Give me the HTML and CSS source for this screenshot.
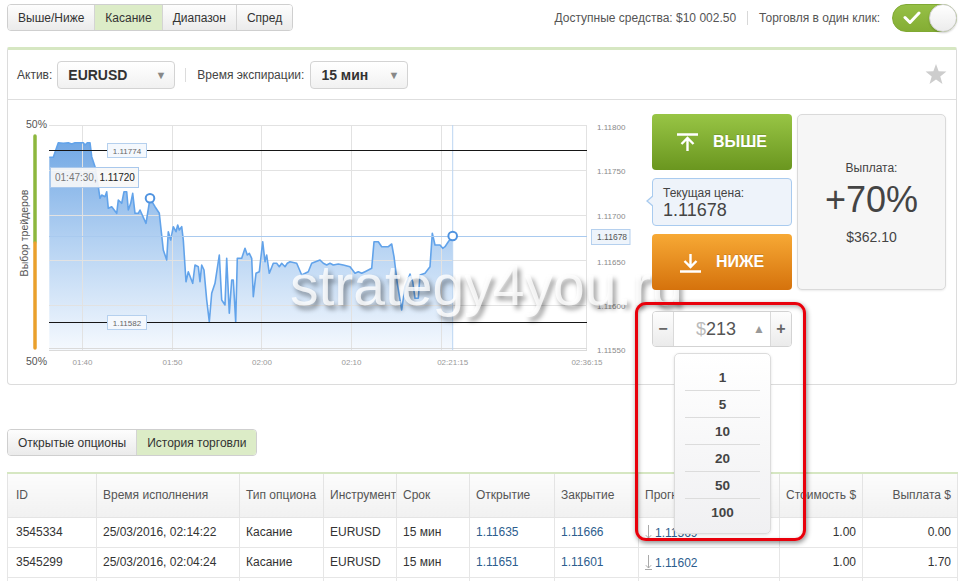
FILE: index.html
```html
<!DOCTYPE html>
<html lang="ru">
<head>
<meta charset="utf-8">
<title>Касание</title>
<link rel="stylesheet" href="styles.css">
</head>
<body>
<div class="page">
  <header class="topbar">
    <nav class="seg">
      <span class="seg-item">Выше/Ниже</span>
      <span class="seg-item active">Касание</span>
      <span class="seg-item">Диапазон</span>
      <span class="seg-item">Спред</span>
    </nav>
    <div class="account">
      <span>Доступные средства: $10 002.50</span>
      <span class="sep"></span>
      <span>Торговля в один клик:</span>
      <span class="toggle">
        <svg class="check" width="18" height="14" viewBox="0 0 18 14"><path d="M2 6.5L7 11.5L16 2" fill="none" stroke="#fff" stroke-width="3" stroke-linecap="round" stroke-linejoin="round"/></svg>
        <span class="knob"></span>
      </span>
    </div>
  </header>

  <section class="panel">
    <div class="panel-head">
      <span class="lbl">Актив:</span>
      <div class="select sel-asset"><span>EURUSD</span><span class="caret">▼</span></div>
      <span class="vsep"></span>
      <span class="lbl">Время экспирации:</span>
      <div class="select sel-exp"><span>15 мин</span><span class="caret">▼</span></div>
      <svg class="star" width="22" height="22" viewBox="0 0 22 22"><polygon points="11,0 13.65,7.36 21.46,7.6 15.28,12.39 17.47,19.9 11,15.5 4.53,19.9 6.72,12.39 0.54,7.6 8.35,7.36" fill="#cdcdcd"/></svg>
    </div>
    <div class="panel-body">
      <svg class="chart" width="632" height="284" viewBox="8 100 632 284">
        <defs>
          <linearGradient id="fillg" x1="0" y1="130" x2="0" y2="350" gradientUnits="userSpaceOnUse">
            <stop offset="0" stop-color="#6aa3e3"/>
            <stop offset="0.5" stop-color="#b3d1f2"/>
            <stop offset="1" stop-color="#f5f9fe"/>
          </linearGradient>
        </defs>
        <text x="36.5" y="127.5" class="pct">50%</text>
        <text x="36.5" y="364.5" class="pct">50%</text>
        <line x1="35" y1="136" x2="35" y2="242" stroke="#8db73d" stroke-width="3.5" stroke-linecap="round"/>
        <line x1="35" y1="243" x2="35" y2="348" stroke="#eaa02c" stroke-width="3.5" stroke-linecap="round"/>
        <text transform="translate(28 233) rotate(-90)" class="vlabel">Выбор трейдеров</text>

        <path d="M49.3 350 L49.3 157.3 L53.3 157.3 58.3 142.7 63.3 143.3 68.3 142.7 71.7 144 75 142.7 83.3 142.7 85 145 87.3 142.7 90 142.7 91.7 156.7 95 166.7 98.3 186.7 100 198.3 101.7 195 105 196.7 106.7 191.7 108.3 208.3 111.7 206.7 116.7 213.3 118.3 200 121.7 203.3 124 191.7 126.7 191.7 128.3 210 130.7 203.3 132.7 193.3 135 213.3 138.3 213.3 140 210 146 223.3 150 198.3 155 206.7 159.3 213.3 163.3 250 166.7 260 168.3 231.7 170.7 240 173.3 226.7 176 231.7 177.7 225 179.3 230 181.7 226.7 183.3 240 186 281.7 188.3 271.7 192.7 283.3 195 265 198.3 266.7 200 281.7 201.7 265 204 270 206.7 300 209.3 321.7 211.7 293.3 215 283.3 219.3 255 221.7 300 225 305 226.7 258.3 229.3 313.3 231.7 280 233.3 280 235.7 321.7 237.3 258.3 241.7 258.3 245 248.3 247.3 255 249.3 253.3 251.7 258.3 253.3 296.7 256 273.3 259.3 271.7 262.7 241.7 265 261.7 266.7 255 269.3 273.3 273.3 263.3 276.7 263.3 279.3 266.7 281.7 263.3 285 266.7 287.3 263.3 290 261.7 296.7 263.3 301.7 275 308.3 271.7 311.7 263.3 320 260 323.3 263.3 326.7 265 330 263.3 333.3 265 338.3 264 343.3 265 350 266.7 355 273.3 358.3 271.7 361.7 273.3 365 271.7 371.7 268.3 374 241.7 378.3 241.7 381.7 246.7 388.3 246.7 391.7 244 394 256.7 397.3 283.3 401.7 310 405 286.7 410 274 412.7 281.7 415 298.3 418.3 298.3 420 275 425 273.3 430 266.7 432.3 233.3 435 245 440 245 442.7 248.3 445 246.7 448.3 241.7 452.7 236 L452.7 350 Z" fill="url(#fillg)"/>

        <g stroke="#e2e2e2" stroke-width="1" fill="none">
          <path d="M49 125.5H587M49 170.5H587M49 215.5H587M49 260.5H587M49 305.5H587"/>
          <path d="M82.5 125V351M172.5 125V351M261.5 125V351M351.5 125V351M441.5 125V351M586.5 125V351"/>
        </g>
        <path d="M49 348.5H587M49 350.5H587" stroke="#dadada" fill="none"/>
        <path d="M452.7 125V350" stroke="#bcd6f2" fill="none"/>

        <path d="M49.3 157.3 L53.3 157.3 58.3 142.7 63.3 143.3 68.3 142.7 71.7 144 75 142.7 83.3 142.7 85 145 87.3 142.7 90 142.7 91.7 156.7 95 166.7 98.3 186.7 100 198.3 101.7 195 105 196.7 106.7 191.7 108.3 208.3 111.7 206.7 116.7 213.3 118.3 200 121.7 203.3 124 191.7 126.7 191.7 128.3 210 130.7 203.3 132.7 193.3 135 213.3 138.3 213.3 140 210 146 223.3 150 198.3 155 206.7 159.3 213.3 163.3 250 166.7 260 168.3 231.7 170.7 240 173.3 226.7 176 231.7 177.7 225 179.3 230 181.7 226.7 183.3 240 186 281.7 188.3 271.7 192.7 283.3 195 265 198.3 266.7 200 281.7 201.7 265 204 270 206.7 300 209.3 321.7 211.7 293.3 215 283.3 219.3 255 221.7 300 225 305 226.7 258.3 229.3 313.3 231.7 280 233.3 280 235.7 321.7 237.3 258.3 241.7 258.3 245 248.3 247.3 255 249.3 253.3 251.7 258.3 253.3 296.7 256 273.3 259.3 271.7 262.7 241.7 265 261.7 266.7 255 269.3 273.3 273.3 263.3 276.7 263.3 279.3 266.7 281.7 263.3 285 266.7 287.3 263.3 290 261.7 296.7 263.3 301.7 275 308.3 271.7 311.7 263.3 320 260 323.3 263.3 326.7 265 330 263.3 333.3 265 338.3 264 343.3 265 350 266.7 355 273.3 358.3 271.7 361.7 273.3 365 271.7 371.7 268.3 374 241.7 378.3 241.7 381.7 246.7 388.3 246.7 391.7 244 394 256.7 397.3 283.3 401.7 310 405 286.7 410 274 412.7 281.7 415 298.3 418.3 298.3 420 275 425 273.3 430 266.7 432.3 233.3 435 245 440 245 442.7 248.3 445 246.7 448.3 241.7 452.7 236" fill="none" stroke="#62a3ea" stroke-width="1.6" stroke-linejoin="round"/>

        <path d="M49 236.5H587" stroke="#a9caef" fill="none"/>
        <path d="M49 150.5H587M49 322.5H587" stroke="#161616" stroke-width="1.2" fill="none"/>

        <rect x="107.5" y="143.5" width="39" height="14" fill="#f4f8fd" stroke="#b5d0ee"/>
        <text x="127" y="153.5" class="box-t">1.11774</text>
        <rect x="107.5" y="315.5" width="39" height="14" fill="#f4f8fd" stroke="#b5d0ee"/>
        <text x="127" y="325.5" class="box-t">1.11582</text>

        <rect x="50.5" y="167.5" width="88" height="20" fill="#f7f7f7" fill-opacity="0.92" stroke="#a9c8ec"/>
        <text x="55" y="181" class="tip"><tspan fill="#777">01:47:30, </tspan><tspan fill="#222">1.11720</tspan></text>

        <circle cx="150" cy="198.3" r="4.3" fill="#fff" stroke="#4f93e0" stroke-width="2"/>
        <circle cx="452.7" cy="236" r="4.3" fill="#fff" stroke="#4f93e0" stroke-width="2"/>

        <g class="ytick">
          <text x="597" y="130">1.11800</text>
          <text x="597" y="174">1.11750</text>
          <text x="597" y="219">1.11700</text>
          <text x="597" y="264.5">1.11650</text>
          <text x="597" y="309">1.11600</text>
          <text x="597" y="353">1.11550</text>
        </g>
        <rect x="591.5" y="229.5" width="38.5" height="15" fill="#eef4fb" stroke="#b5d0ee"/>
        <text x="597" y="240" class="cur-t">1.11678</text>

        <g class="xtick">
          <text x="82.5" y="364.5">01:40</text>
          <text x="172.5" y="364.5">01:50</text>
          <text x="262" y="364.5">02:00</text>
          <text x="351.5" y="364.5">02:10</text>
          <text x="452.7" y="364.5">02:21:15</text>
          <text x="587" y="364.5" text-anchor="end">02:36:15</text>
        </g>
      </svg>

      <div class="watermark">strategy4you.ru</div>

      <div class="trade">
        <div class="trade-grid">
          <button class="btn btn-up">
            <svg width="21" height="18" viewBox="0 0 21 18"><path d="M0 1.5H21M10.5 18V5M4.5 11L10.5 5L16.5 11" fill="none" stroke="#fff" stroke-width="2.4"/></svg>
            <span>ВЫШЕ</span>
          </button>
          <div class="price">
            <div class="price-label">Текущая цена:</div>
            <div class="price-value">1.11678</div>
          </div>
          <button class="btn btn-down">
            <svg width="21" height="19" viewBox="0 0 21 19"><path d="M10.5 0V13M4.5 7L10.5 13L16.5 7M0 17.5H21" fill="none" stroke="#fff" stroke-width="2.4"/></svg>
            <span>НИЖЕ</span>
          </button>
          <div class="payout">
            <div class="pay-label">Выплата:</div>
            <div class="pay-pct">+70%</div>
            <div class="pay-sum">$362.10</div>
          </div>
        </div>
        <div class="amount">
          <span class="amt-btn minus">−</span>
          <span class="amt-mid"><span class="cur">$</span>213<span class="amt-caret">▲</span></span>
          <span class="amt-btn plus">+</span>
          <ul class="dropdown">
            <li>1</li>
            <li>5</li>
            <li>10</li>
            <li>20</li>
            <li>50</li>
            <li>100</li>
          </ul>
          <div class="highlight"></div>
        </div>
      </div>
    </div>
  </section>

  <nav class="seg tabs2">
    <span class="seg-item">Открытые опционы</span>
    <span class="seg-item active">История торговли</span>
  </nav>

  <table class="history">
    <colgroup>
      <col style="width:89px"><col style="width:143px"><col style="width:84px"><col style="width:73px"><col style="width:73px">
      <col style="width:85px"><col style="width:84px"><col style="width:141px"><col style="width:83px"><col style="width:95px">
    </colgroup>
    <thead>
      <tr>
        <th class="first">ID</th>
        <th>Время исполнения</th>
        <th>Тип опциона</th>
        <th>Инструмент</th>
        <th>Срок</th>
        <th>Открытие</th>
        <th>Закрытие</th>
        <th>Прогноз</th>
        <th class="num">Стоимость $</th>
        <th class="num">Выплата $</th>
      </tr>
    </thead>
    <tbody>
      <tr>
        <td class="first">3545334</td>
        <td>25/03/2016, 02:14:22</td>
        <td>Касание</td>
        <td>EURUSD</td>
        <td>15 мин</td>
        <td class="rate">1.11635</td>
        <td class="rate">1.11666</td>
        <td class="rate"><svg class="farrow" width="7" height="15" viewBox="0 0 7 15"><path d="M3.5 0V13M0.8 10.2L3.5 13L6.2 10.2M0 14.5H7" fill="none" stroke="#a9a9a9" stroke-width="1"/></svg>1.11569</td>
        <td class="num">1.00</td>
        <td class="num">0.00</td>
      </tr>
      <tr>
        <td class="first">3545299</td>
        <td>25/03/2016, 02:04:24</td>
        <td>Касание</td>
        <td>EURUSD</td>
        <td>15 мин</td>
        <td class="rate">1.11651</td>
        <td class="rate">1.11601</td>
        <td class="rate"><svg class="farrow" width="7" height="15" viewBox="0 0 7 15"><path d="M3.5 0V13M0.8 10.2L3.5 13L6.2 10.2M0 14.5H7" fill="none" stroke="#a9a9a9" stroke-width="1"/></svg>1.11602</td>
        <td class="num">1.00</td>
        <td class="num">1.70</td>
      </tr>
      <tr>
        <td class="first"></td><td></td><td></td><td></td><td></td>
        <td></td><td></td><td></td><td></td><td></td>
      </tr>
    </tbody>
  </table>
</div>
</body>
</html>
```

FILE: styles.css
```css
* { box-sizing: border-box; }
html, body { margin: 0; padding: 0; background: #fff; }
body {
  font-family: "Liberation Sans", Arial, sans-serif;
  font-size: 12px;
  color: #333;
}
.page { width: 962px; padding: 4px 5px 0 7px; }

/* top bar */
.topbar { display: flex; justify-content: space-between; align-items: center; height: 27px; }
.seg {
  display: flex;
  width: max-content;
  height: 27px;
  border: 1px solid #cfcfcf;
  border-radius: 4px;
  overflow: hidden;
}
.seg-item {
  display: flex;
  align-items: center;
  padding: 0 10px;
  background: linear-gradient(#fdfdfd, #ebebeb);
  border-left: 1px solid #d4d4d4;
  color: #333;
}
.seg-item:first-child { border-left: 0; }
.seg-item.active { background: #dcecc7; }

.account { display: flex; align-items: center; color: #555; }
.account .sep { width: 1px; height: 14px; background: #d8d8d8; margin: 0 11px; }
.toggle {
  display: flex;
  align-items: center;
  width: 65px;
  height: 28px;
  margin-left: 12px;
  border-radius: 14px;
  background: linear-gradient(#96c046, #84ad34);
  border: 1px solid #80a933;
}
.toggle .check { margin-left: 10px; }
.knob {
  margin-left: auto;
  margin-right: -1px;
  width: 28px;
  height: 28px;
  border-radius: 50%;
  background: linear-gradient(#ffffff, #ececec);
  border: 1px solid #cfcfcf;
  box-shadow: 0 1px 2px rgba(0,0,0,0.2);
}

/* main panel */
.panel {
  margin-top: 16px;
  border: 1px solid #dcdcdc;
  border-top: 3px solid #d6e7c2;
  border-radius: 2px 2px 4px 4px;
}
.panel-head {
  height: 50px;
  display: flex;
  align-items: center;
  padding: 0 9px;
  border-bottom: 1px solid #dedede;
}
.lbl { color: #444; }
.select {
  height: 28px;
  display: flex;
  align-items: center;
  justify-content: space-between;
  padding: 0 8px 0 10px;
  border: 1px solid #d3d3d3;
  border-radius: 4px;
  background: linear-gradient(#ffffff, #f1f1f1);
  font-weight: bold;
  font-size: 14px;
  color: #333;
}
.sel-asset { width: 118px; margin-left: 5px; }
.sel-exp { width: 98px; margin-left: 6px; }
.caret { font-size: 11px; color: #888; font-weight: normal; }
.vsep { width: 1px; height: 14px; background: #dcdcdc; margin: 0 11px 0 10px; }
.star { margin-left: auto; }

.panel-body { display: flex; position: relative; height: 284px; }
.chart { display: block; flex: none; }
.chart text { font-family: "Liberation Sans", Arial, sans-serif; }
.chart .pct { font-size: 10.5px; fill: #555; text-anchor: middle; }
.chart .vlabel { font-size: 10.5px; fill: #555; text-anchor: middle; }
.chart .box-t { font-size: 8px; fill: #666; text-anchor: middle; }
.chart .tip { font-size: 10px; }
.chart .ytick text { font-size: 8px; fill: #8a8a8a; }
.chart .cur-t { font-size: 8.5px; fill: #555; }
.chart .xtick text { font-size: 8px; fill: #999; text-anchor: middle; }

.watermark {
  position: absolute;
  left: 282px;
  top: 157px;
  font-size: 57px;
  line-height: 1;
  color: rgba(255,255,255,0.8);
  text-shadow: 3px 4px 5px rgba(0,0,0,0.4);
  white-space: nowrap;
  pointer-events: none;
}

/* trade column */
.trade {
  flex: none;
  width: 294px;
  margin-left: 12px;
  padding-top: 14px;
  position: relative;
  z-index: 1;
}
.trade-grid {
  display: grid;
  grid-template-columns: 140px 149px;
  grid-template-rows: 56px 48px 56px;
  column-gap: 5px;
  row-gap: 8px;
}
.btn {
  display: flex;
  align-items: center;
  justify-content: center;
  gap: 15px;
  border: 0;
  border-radius: 4px;
  padding: 0;
  color: #fff;
  font-family: inherit;
  font-weight: bold;
  font-size: 16px;
  text-shadow: 0 -1px 0 rgba(0,0,0,0.15);
}
.btn-up { grid-column: 1; grid-row: 1; background: linear-gradient(#98c545, #6a961f); }
.btn-down { grid-column: 1; grid-row: 3; background: linear-gradient(#f7a935, #d5720c); }
.btn-down svg { margin-top: 2px; }

.price {
  grid-column: 1;
  grid-row: 2;
  position: relative;
  background: #eef3fa;
  border: 1px solid #a9cbef;
  border-radius: 4px;
  padding: 7px 0 0 10px;
  color: #444;
}
.price::before, .price::after {
  content: "";
  position: absolute;
  top: 16px;
  border-style: solid;
  border-color: transparent;
  border-width: 6px 7px 6px 0;
}
.price::before { left: -7px; border-right-color: #a9cbef; }
.price::after { left: -5.5px; border-right-color: #eef3fa; }
.price-label { font-size: 12px; line-height: 14px; }
.price-value { font-size: 18px; line-height: 20px; }

.payout {
  grid-column: 2;
  grid-row: 1 / 4;
  display: flex;
  flex-direction: column;
  align-items: center;
  padding-top: 46px;
  background: #f6f6f6;
  border: 1px solid #dadada;
  border-radius: 5px;
  box-shadow: 0 1px 2px rgba(0,0,0,0.08);
  color: #444;
}
.pay-label { font-size: 12px; line-height: 14px; margin-bottom: 5px; }
.pay-pct { font-size: 36px; line-height: 40px; }
.pay-sum { font-size: 14px; line-height: 16px; margin-top: 9px; }

.amount {
  position: relative;
  display: flex;
  width: 140px;
  height: 36px;
  margin-top: 21px;
  border: 1px solid #d3d3d3;
  border-radius: 4px;
  background: #fff;
}
.amt-btn {
  width: 21px;
  flex: none;
  display: flex;
  align-items: center;
  justify-content: center;
  background: linear-gradient(#fdfdfd, #ebebeb);
  color: #666;
  font-weight: bold;
  font-size: 16px;
}
.amt-btn.minus { border-right: 1px solid #dadada; border-radius: 3px 0 0 3px; }
.amt-btn.plus { border-left: 1px solid #dadada; border-radius: 0 3px 3px 0; }
.amt-mid {
  flex: 1;
  display: flex;
  align-items: center;
  padding: 0 5px 0 22px;
  font-size: 18px;
  color: #555;
}
.cur { color: #bbb; }
.amt-caret { margin-left: auto; font-size: 12px; color: #999; }

.dropdown {
  position: absolute;
  left: 21px;
  top: 41px;
  z-index: 5;
  width: 97px;
  margin: 0;
  padding: 10px 0 8px;
  list-style: none;
  background: linear-gradient(#ffffff, #f0f0f2);
  border: 1px solid #dcdcdc;
  border-radius: 5px;
  box-shadow: 0 1px 3px rgba(0,0,0,0.12);
}
.dropdown li {
  height: 27px;
  margin: 0 10px;
  display: flex;
  align-items: center;
  justify-content: center;
  border-bottom: 1px solid #dcdcdc;
  font-weight: bold;
  font-size: 13.5px;
  color: #444;
}
.dropdown li:last-child { border-bottom: 0; height: 26px; }

.highlight {
  position: absolute;
  left: -18px;
  top: -10px;
  z-index: 6;
  width: 171px;
  height: 239px;
  border: 3px solid #e8000b;
  border-radius: 11px;
  box-shadow: 1px 2px 5px rgba(0,0,0,0.45), inset 1px 2px 4px rgba(0,0,0,0.3);
  pointer-events: none;
}

/* history */
.tabs2 { margin-top: 44px; }

.history {
  margin-top: 16px;
  width: 950px;
  border-collapse: collapse;
  table-layout: fixed;
  border-top: 2px solid #d6e7c2;
}
.history th {
  height: 44px;
  padding: 0 6px;
  text-align: left;
  font-weight: normal;
  color: #555;
  background: linear-gradient(#fcfcfc, #f1f1f1);
  border: 1px solid #e4e4e4;
  border-top: 0;
  white-space: nowrap;
  overflow: hidden;
}
.history td {
  height: 30px;
  padding: 0 6px;
  border: 1px solid #e6e6e6;
  color: #333;
  white-space: nowrap;
}
.history .first { padding-left: 8px; }
.history .num { text-align: right; }
.history td.rate { color: #2d5d8e; }
.farrow { vertical-align: -3px; margin-right: 3px; }
```
